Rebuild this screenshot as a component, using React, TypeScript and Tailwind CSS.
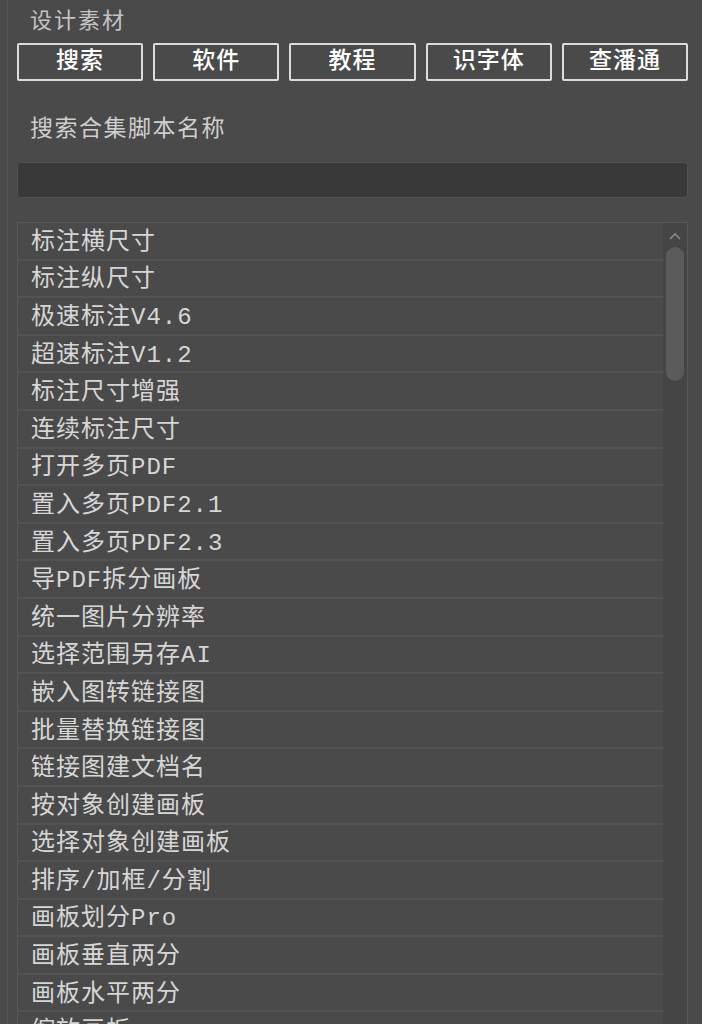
const TABS = ["搜索", "软件", "教程", "识字体", "查潘通"];

const SCRIPTS = [
  "标注横尺寸",
  "标注纵尺寸",
  "极速标注V4.6",
  "超速标注V1.2",
  "标注尺寸增强",
  "连续标注尺寸",
  "打开多页PDF",
  "置入多页PDF2.1",
  "置入多页PDF2.3",
  "导PDF拆分画板",
  "统一图片分辨率",
  "选择范围另存AI",
  "嵌入图转链接图",
  "批量替换链接图",
  "链接图建文档名",
  "按对象创建画板",
  "选择对象创建画板",
  "排序/加框/分割",
  "画板划分Pro",
  "画板垂直两分",
  "画板水平两分",
  "缩放画板",
  "画板重命名",
];

const FONT = "font-['Liberation_Mono','Noto_Sans_CJK_SC',monospace]";

export default function App() {
  return (
    <div className={`w-[702px] h-[1024px] overflow-hidden bg-[#4a4a4a] ${FONT}`}>
      <div className="h-full ml-[7px] border-l border-[#555555] pl-[9px] pr-[14px] flex flex-col">
        {/* ── Header ───────────────────────────── */}
        <div className="shrink-0 pl-[13px] pt-[9px] h-[43px] text-[22px] leading-[28px] tracking-[2px] text-[#c4c4c4]">
          设计素材
        </div>

        {/* ── Tabs ─────────────────────────────── */}
        <div className="shrink-0 flex gap-[10px] h-[38px]">
          {TABS.map(t => (
            <button
              key={t}
              className="flex-1 flex items-center justify-center border-2 border-[#dcdcdc] rounded-[2px] text-[23px] font-medium text-white tracking-[1px] leading-none">
              {t}
            </button>
          ))}
        </div>

        <div className="shrink-0 pl-[13px] mt-[36px] h-[26px] text-[23px] leading-[26px] tracking-[1.5px] text-[#cfcfcf]">
          搜索合集脚本名称
        </div>

        {/* ── Search input ─────────────────────── */}
        <div className="shrink-0 mt-[19px] h-[36px] rounded-[3px] bg-[#393939] border border-[#525252]" />

        {/* ── Script list ──────────────────────── */}
        <div className="mt-[24px] flex-1 min-h-0 flex border-t border-r border-l border-[#585858] overflow-hidden">
          <div className="flex-1 min-w-0">
            {SCRIPTS.map(s => (
              <div
                key={s}
                className="h-[37.6px] flex items-center pl-[13px] pt-[4px] border-b-2 border-[#535353] text-[24px] tracking-[1px] text-[#d6d6d6] whitespace-nowrap">
                {s}
              </div>
            ))}
          </div>

          {/* scrollbar */}
          <div className="w-[24px] shrink-0 bg-[#454545] flex flex-col items-center">
            <svg width="14" height="20" viewBox="0 0 14 20" className="mt-[4px] shrink-0">
              <path d="M2 12 L7 7 L12 12" stroke="#8a8a8a" strokeWidth="1.6" fill="none" />
            </svg>
            <div className="w-[18px] h-[134px] rounded-full bg-[#5b5b5b]" />
          </div>
        </div>
      </div>
    </div>
  );
}
